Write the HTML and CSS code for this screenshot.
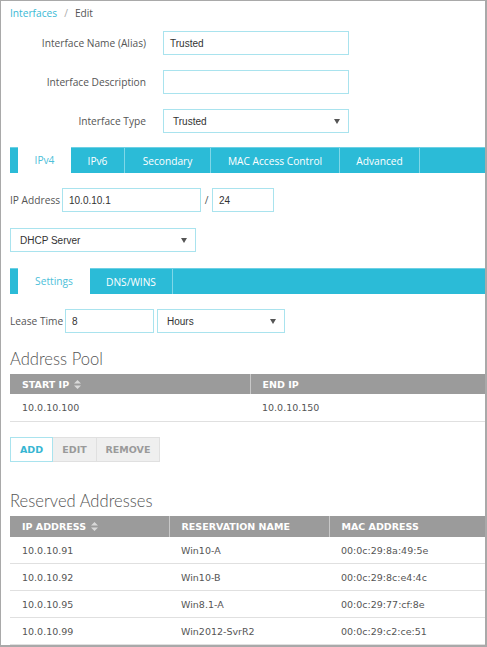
FILE: index.html
```html
<!DOCTYPE html>
<html>
<head>
<meta charset="utf-8">
<link rel="stylesheet" href="styles.css">
</head>
<body>
<div class="frame">
  <nav class="crumbs"><a class="crumb-link">Interfaces</a><span class="crumb-sep">/</span><span class="crumb-cur">Edit</span></nav>

  <div class="form-grid">
    <label class="f-label">Interface Name (Alias)</label>
    <div class="field wide"><span class="val">Trusted</span></div>
    <label class="f-label">Interface Description</label>
    <div class="field wide"></div>
    <label class="f-label">Interface Type</label>
    <div class="field wide select"><span class="val sel">Trusted</span><svg class="caret" width="6" height="5" viewBox="0 0 6 5"><path d="M0 0H6L3 5Z" fill="#555"/></svg></div>
  </div>

  <div class="tabs main-tabs">
    <div class="tab active">IPv4</div>
    <div class="tab">IPv6</div>
    <div class="tab">Secondary</div>
    <div class="tab">MAC Access Control</div>
    <div class="tab">Advanced</div>
  </div>

  <div class="inline-row ip-row">
    <span class="i-label">IP Address</span>
    <div class="field ip"><span class="val">10.0.10.1</span></div>
    <span class="slash">/</span>
    <div class="field mask"><span class="val">24</span></div>
  </div>

  <div class="field select dhcp"><span class="val sel">DHCP Server</span><svg class="caret" width="6" height="5" viewBox="0 0 6 5"><path d="M0 0H6L3 5Z" fill="#555"/></svg></div>

  <div class="tabs sub-tabs">
    <div class="tab active">Settings</div>
    <div class="tab">DNS/WINS</div>
  </div>

  <div class="inline-row lease-row">
    <span class="i-label">Lease Time</span>
    <div class="field lease"><span class="val">8</span></div>
    <div class="field select hours"><span class="val sel">Hours</span><svg class="caret" width="6" height="5" viewBox="0 0 6 5"><path d="M0 0H6L3 5Z" fill="#555"/></svg></div>
  </div>

  <h2 class="section-title pool-title">Address Pool</h2>
  <table class="grid pool">
    <thead>
      <tr><th class="c-start">START IP <svg class="sort" width="7" height="9" viewBox="0 0 7 9"><path d="M0 3.5L3.5 0L7 3.5Z M0 5.5H7L3.5 9Z" fill="#d9d9d9"/></svg></th><th>END IP</th></tr>
    </thead>
    <tbody>
      <tr><td>10.0.10.100</td><td>10.0.10.150</td></tr>
    </tbody>
  </table>

  <div class="btns">
    <span class="btn primary">ADD</span><span class="btn">EDIT</span><span class="btn">REMOVE</span>
  </div>

  <h2 class="section-title res-title">Reserved Addresses</h2>
  <table class="grid reserved">
    <thead>
      <tr><th class="c-ip">IP ADDRESS <svg class="sort" width="7" height="9" viewBox="0 0 7 9"><path d="M0 3.5L3.5 0L7 3.5Z M0 5.5H7L3.5 9Z" fill="#d9d9d9"/></svg></th><th class="c-name">RESERVATION NAME</th><th>MAC ADDRESS</th></tr>
    </thead>
    <tbody>
      <tr><td>10.0.10.91</td><td>Win10-A</td><td>00:0c:29:8a:49:5e</td></tr>
      <tr><td>10.0.10.92</td><td>Win10-B</td><td>00:0c:29:8c:e4:4c</td></tr>
      <tr><td>10.0.10.95</td><td>Win8.1-A</td><td>00:0c:29:77:cf:8e</td></tr>
      <tr><td>10.0.10.99</td><td>Win2012-SvrR2</td><td>00:0c:29:c2:ce:51</td></tr>
    </tbody>
  </table>
</div>
</body>
</html>
```

FILE: styles.css
```css
html, body {
  margin: 0;
  padding: 0;
  background: #fff;
}
.frame {
  width: 487px;
  height: 647px;
  box-sizing: border-box;
  border: 1px solid #a9a9a9;
  border-right-width: 2px;
  border-bottom-width: 2px;
  padding-left: 9px;
  overflow: hidden;
  font-family: "Open Sans", "Liberation Sans", sans-serif;
  font-size: 10.2px;
  color: #555;
}
.crumbs {
  padding-top: 3px;
  line-height: 18px;
  height: 18px;
}
.crumb-link { color: #3ab9d5; }
.crumb-sep { color: #aaa; margin: 0 7px; }
.crumb-cur { color: #555; }

.form-grid {
  margin-top: 9px;
  display: grid;
  grid-template-columns: 136px 186px;
  column-gap: 17px;
  row-gap: 15px;
  align-items: center;
}
.f-label {
  text-align: right;
  color: #555;
  white-space: nowrap;
}
.field {
  box-sizing: border-box;
  height: 24px;
  border: 1px solid #a9e3ee;
  background: #fff;
  display: flex;
  align-items: center;
  padding-left: 6px;
  font-family: "Liberation Sans", Arial, sans-serif;
  font-size: 10px;
  color: #333;
  flex: none;
}
.field.wide { width: 186px; }
.select { justify-content: space-between; padding-right: 8px; padding-left: 9px; }
.caret { flex: none; }

.tabs {
  display: flex;
  height: 26px;
  background: #2bbbd7;
  border-top: 1px solid #6dd0e4;
  box-sizing: border-box;
  padding-left: 8px;
}
.tab {
  color: #fff;
  display: flex;
  align-items: center;
  justify-content: center;
  box-sizing: border-box;
  border-right: 1px solid #7fd7e8;
  white-space: nowrap;
}
.tab.active {
  background: #fff;
  color: #4cc0d9;
  border-right: none;
  margin-top: -1px;
}
.main-tabs { margin-top: 14px; }
.main-tabs .tab:nth-child(1) { width: 53px; }
.main-tabs .tab:nth-child(2) { width: 54px; }
.main-tabs .tab:nth-child(3) { width: 86px; }
.main-tabs .tab:nth-child(4) { width: 129px; }
.main-tabs .tab:nth-child(5) { width: 80px; }
.sub-tabs { margin-top: 16px; }
.sub-tabs .tab:nth-child(1) { width: 72px; }
.sub-tabs .tab:nth-child(2) { width: 83px; }

.inline-row {
  display: flex;
  align-items: center;
}
.i-label { color: #555; white-space: nowrap; flex: none; }
.ip-row { margin-top: 15px; }
.ip-row .i-label { width: 52px; }
.field.ip { width: 139px; }
.slash { width: 11px; text-align: center; color: #555; flex: none; }
.field.mask { width: 62px; }

.field.dhcp { margin-top: 16px; width: 186px; height: 24px; }

.lease-row { margin-top: 15px; }
.lease-row .i-label { width: 55px; }
.field.lease { width: 89px; margin-right: 3px; }
.field.hours { width: 128px; }

.section-title {
  margin: 0;
  font-family: Lato, "Open Sans", sans-serif;
  font-weight: 300;
  font-size: 16.6px;
  line-height: 22px;
  color: #555;
}
.pool-title { margin-top: 15px; }
.res-title { margin-top: 28px; }

.grid {
  border-collapse: collapse;
  width: 475px;
  margin-top: 4px;
  font-family: "DejaVu Sans", Verdana, sans-serif;
  font-size: 9.5px;
  table-layout: fixed;
}
.grid th {
  box-sizing: border-box;
  background: #9b9b9b;
  color: #fff;
  font-weight: bold;
  text-align: left;
  height: 20px;
  padding: 0 0 0 12px;
  border-left: 1px solid #c8c8c8;
  white-space: nowrap;
}
.grid th:first-child { border-left: none; }
.grid td {
  height: 27px;
  padding: 0 0 0 12px;
  color: #555;
  border-bottom: 1px solid #e0e0e0;
  white-space: nowrap;
}
.pool .c-start { width: 240px; }
.reserved th { height: 21px; }
.reserved td { height: 26px; }
.reserved .c-ip { width: 159px; }
.reserved .c-name { width: 160px; }
.sort { vertical-align: -1px; margin-left: 2px; }

.btns {
  margin-top: 15px;
  display: flex;
  font-family: "DejaVu Sans", Verdana, sans-serif;
  font-weight: bold;
  font-size: 9.5px;
}
.btn {
  height: 25px;
  box-sizing: border-box;
  display: flex;
  align-items: center;
  justify-content: center;
  background: #efefef;
  color: #9a9a9a;
  border: 1px solid #e0e0e0;
  border-left: none;
}
.btn:nth-child(1) { width: 43px; }
.btn:nth-child(2) { width: 44px; }
.btn:nth-child(3) { width: 63px; }
.btn.primary {
  background: #fff;
  color: #37b6d3;
  border: 1px solid #a9e3ee;
}
```
